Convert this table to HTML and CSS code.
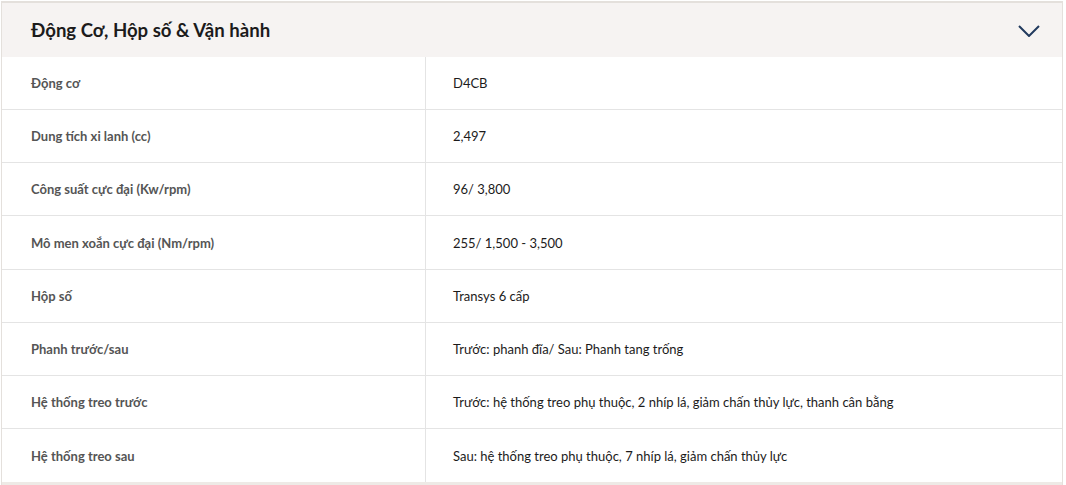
FILE: index.html
```html
<!DOCTYPE html>
<html lang="vi">
<head>
    <meta charset="UTF-8">
    <meta name="viewport" content="width=device-width, initial-scale=1.0">
    <title>Thông số kỹ thuật</title>
    <link rel="stylesheet" href="styles.css">
</head>
<body>
    <section class="spec-panel">
        <div class="spec-header">
            <h2 class="spec-title">Động Cơ, Hộp số &amp; Vận hành</h2>
            <svg class="spec-toggle" width="22" height="12" viewBox="0 0 22 12" aria-hidden="true">
                <path d="M1 1 L11 11 L21 1" fill="none" stroke="#223a5e" stroke-width="2"/>
            </svg>
        </div>
        <div class="spec-table">
            <div class="spec-row">
                <div class="spec-label">Động cơ</div>
                <div class="spec-value">D4CB</div>
            </div>
            <div class="spec-row">
                <div class="spec-label">Dung tích xi lanh (cc)</div>
                <div class="spec-value">2,497</div>
            </div>
            <div class="spec-row">
                <div class="spec-label">Công suất cực đại (Kw/rpm)</div>
                <div class="spec-value">96/ 3,800</div>
            </div>
            <div class="spec-row">
                <div class="spec-label">Mô men xoắn cực đại (Nm/rpm)</div>
                <div class="spec-value">255/ 1,500 - 3,500</div>
            </div>
            <div class="spec-row">
                <div class="spec-label">Hộp số</div>
                <div class="spec-value">Transys 6 cấp</div>
            </div>
            <div class="spec-row">
                <div class="spec-label">Phanh trước/sau</div>
                <div class="spec-value">Trước: phanh đĩa/ Sau: Phanh tang trống</div>
            </div>
            <div class="spec-row">
                <div class="spec-label">Hệ thống treo trước</div>
                <div class="spec-value">Trước: hệ thống treo phụ thuộc, 2 nhíp lá, giảm chấn thủy lực, thanh cân bằng</div>
            </div>
            <div class="spec-row">
                <div class="spec-label">Hệ thống treo sau</div>
                <div class="spec-value">Sau: hệ thống treo phụ thuộc, 7 nhíp lá, giảm chấn thủy lực</div>
            </div>
        </div>
    </section>
    <div class="next-section"></div>
</body>
</html>
```

FILE: styles.css
```css
body {
    margin: 0;
    padding: 1px 3px 0 1px;
    font-family: Lato, "Noto Sans", sans-serif;
    color: #1c1b1b;
    background-color: #fff;
}

.spec-panel {
    border: 1px solid #e4e0dc;
    border-top-width: 2px;
    border-bottom: none;
}

.spec-header {
    display: flex;
    align-items: center;
    justify-content: space-between;
    height: 54px;
    padding: 0 22px 0 29px;
    background-color: #f6f3f2;
}

.spec-title {
    margin: 0;
    font-size: 18.6px;
    font-weight: 700;
    color: #1c1b1b;
}

.spec-toggle {
    display: block;
    margin-top: 1px;
}

.spec-row {
    display: grid;
    grid-template-columns: 424px 1fr;
    height: 53.17px;
    box-sizing: border-box;
    border-bottom: 1px solid #e4e4e4;
}

.spec-row:last-child {
    border-bottom: none;
}

.spec-label,
.spec-value {
    display: flex;
    align-items: center;
    font-size: 13px;
}

.spec-label {
    padding-left: 29px;
    border-right: 1px solid #e4e4e4;
    color: #555;
    font-weight: 700;
}

.spec-value {
    padding-left: 27px;
    color: #1c1b1b;
}

.next-section {
    height: 4px;
    border-left: 1px solid #e4e0dc;
    border-right: 1px solid #e4e0dc;
    background-color: #eeeae6;
}
```
